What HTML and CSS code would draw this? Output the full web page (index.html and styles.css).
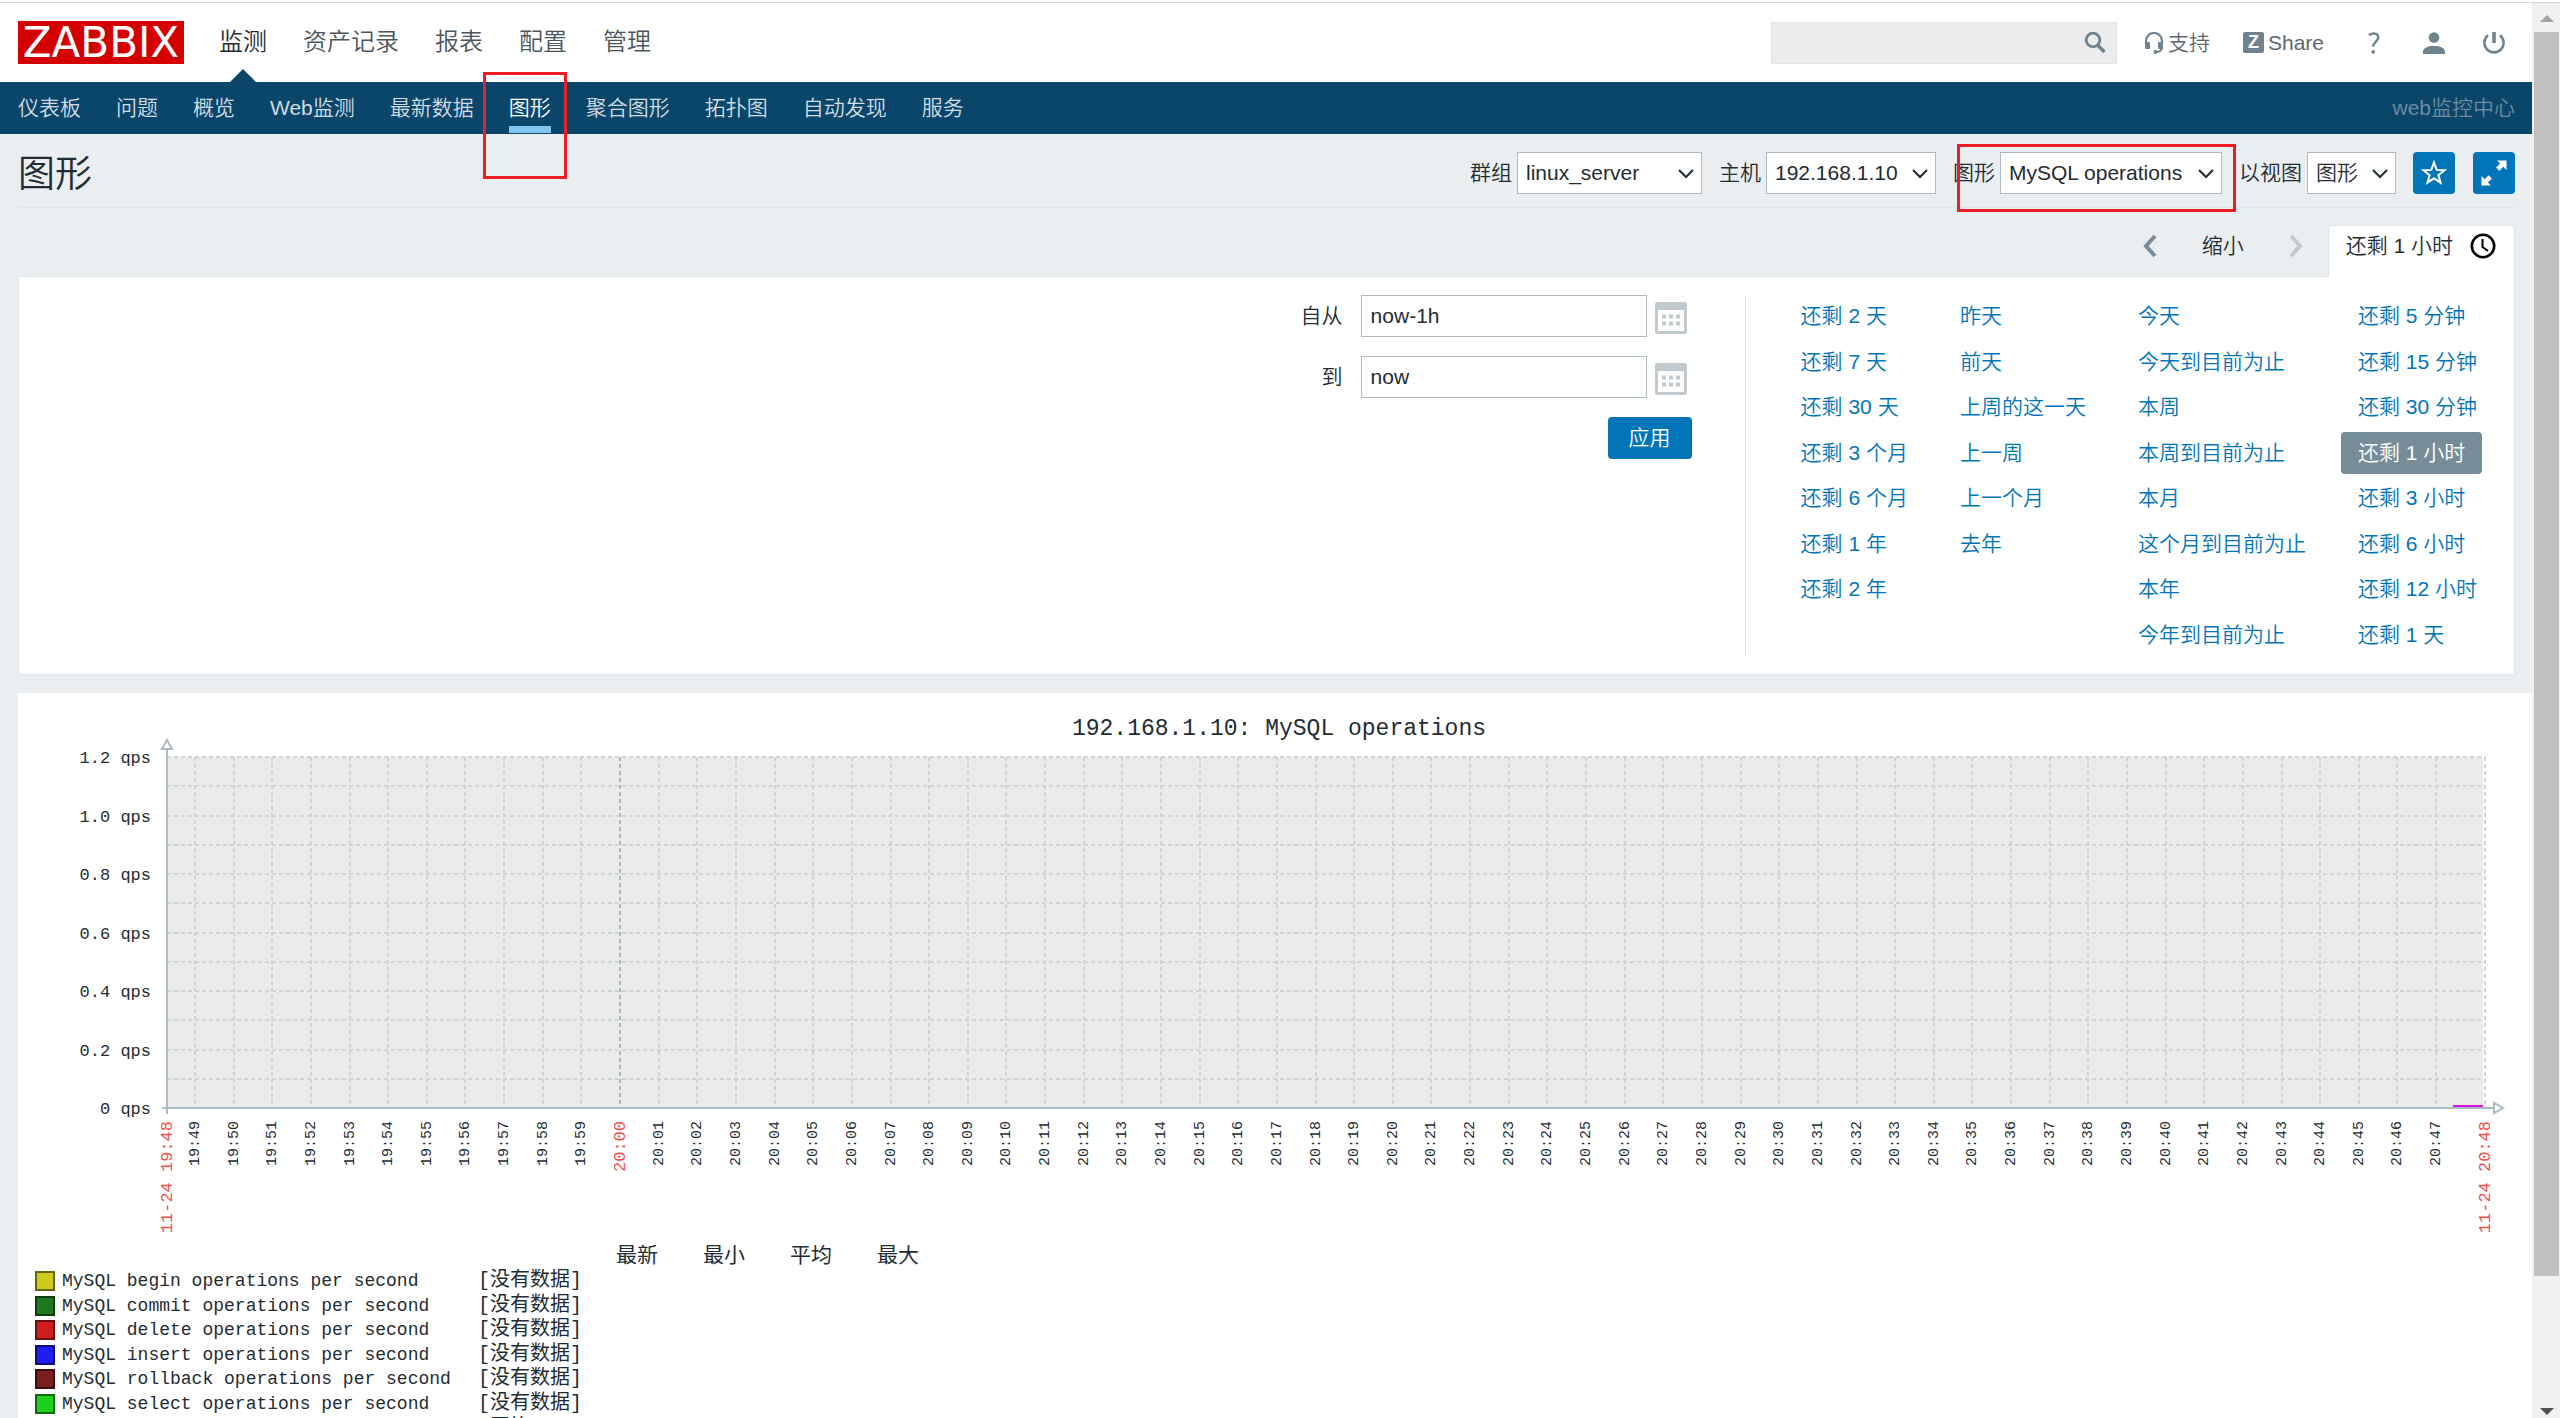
FILE: index.html
```html
<!DOCTYPE html>
<html lang="zh-CN">
<head>
<meta charset="utf-8">
<title>图形</title>
<link rel="stylesheet" href="styles.css">
</head>
<body>
<div class="window">
  <div class="page">
    <header class="top">
      <a class="logo" href="#">ZABBIX</a>
      <nav class="main-nav">
        <a class="selected" href="#">监测</a>
        <a href="#">资产记录</a>
        <a href="#">报表</a>
        <a href="#">配置</a>
        <a href="#">管理</a>
      </nav>
      <form class="search">
        <input type="text" aria-label="搜索">
        <button type="button" aria-label="搜索">
          <svg width="22" height="22" viewBox="0 0 22 22" fill="none" stroke="currentColor"><circle cx="9" cy="8" r="6.8" stroke-width="2.8"/><path d="M13.8 13.2 L20.5 20" stroke-width="3.4"/></svg>
        </button>
      </form>
      <a class="top-link" href="#">
        <svg width="20" height="22" viewBox="0 0 20 22"><path d="M2 12V9a8 8 0 0 1 16 0v3M18 15c0 3.500-3 5-6 5" fill="none" stroke="currentColor" stroke-width="2.200"/><rect x="1" y="10" width="5" height="7" rx="1" fill="currentColor"/><rect x="14" y="10" width="5" height="7" rx="1" fill="currentColor"/><circle cx="11.500" cy="20" r="2" fill="currentColor"/></svg>
        支持
      </a>
      <a class="top-link" href="#"><span class="z-badge">Z</span>Share</a>
      <div class="top-icons">
        <button type="button" aria-label="帮助"><svg width="12" height="22" viewBox="0 0 12 22"><path d="M1 3.200C4 .8 10.200.6 10.200 5.500c0 4-5 4.200-5 9.200" fill="none" stroke="currentColor" stroke-width="2.400"/><circle cx="5.200" cy="19.800" r="1.900" fill="currentColor"/></svg></button>
        <button type="button" aria-label="用户"><svg width="22" height="22" viewBox="0 0 22 22" fill="currentColor"><circle cx="11" cy="5.500" r="5.300"/><path d="M0 22v-2.500C0 16 5 14 11 14s11 2 11 5.500V22z"/></svg></button>
        <button type="button" aria-label="退出"><svg width="22" height="22" viewBox="0 0 22 22" fill="none" stroke="currentColor"><path d="M11 0v11" stroke-width="3.600"/><path d="M5 3.300a9.600 9.600 0 1 0 12 0" stroke-width="2.600"/></svg></button>
      </div>
    </header>

    <nav class="sub-nav">
      <a href="#">仪表板</a>
      <a href="#">问题</a>
      <a href="#">概览</a>
      <a href="#">Web监测</a>
      <a href="#">最新数据</a>
      <a class="selected" href="#">图形<span class="mark mark-nav"></span></a>
      <a href="#">聚合图形</a>
      <a href="#">拓扑图</a>
      <a href="#">自动发现</a>
      <a href="#">服务</a>
      <span class="server-name">web监控中心</span>
    </nav>

    <main>
      <div class="title-row">
        <h1>图形</h1>
        <form class="filters">
          <div class="field">
            <label for="group">群组</label>
            <span class="select select-group"><select id="group"><option>linux_server</option></select><svg width="16" height="10" viewBox="0 0 16 10"><path d="M1 1l7 7 7-7"/></svg></span>
          </div>
          <div class="field">
            <label for="host">主机</label>
            <span class="select select-host"><select id="host"><option>192.168.1.10</option></select><svg width="16" height="10" viewBox="0 0 16 10"><path d="M1 1l7 7 7-7"/></svg></span>
          </div>
          <div class="field">
            <label for="graph">图形</label>
            <span class="select select-graph"><select id="graph"><option>MySQL operations</option></select><svg width="16" height="10" viewBox="0 0 16 10"><path d="M1 1l7 7 7-7"/></svg></span>
            <span class="mark mark-graph"></span>
          </div>
          <div class="field">
            <label for="view">以视图</label>
            <span class="select select-view"><select id="view"><option>图形</option></select><svg width="16" height="10" viewBox="0 0 16 10"><path d="M1 1l7 7 7-7"/></svg></span>
          </div>
          <div class="actions">
            <button class="square" type="button" aria-label="收藏"><svg width="26" height="26" viewBox="0 0 26 26"><path d="M13 2.500l2.700 7.400 7.800.3-6.100 4.900 2.100 7.600-6.500-4.400-6.500 4.400 2.100-7.600-6.100-4.900 7.800-.3z" fill="none" stroke="#fff" stroke-width="2"/></svg></button>
            <button class="square" type="button" aria-label="全屏"><svg width="26" height="26" viewBox="0 0 26 26" fill="#fff"><path d="M16 0.500h9.500v9.500l-3.200-3.200-4 4-3.200-3.200 4-4z"/><path d="M10 25.500H.5V16l3.200 3.200 4-4 3.200 3.200-4 4z"/></svg></button>
          </div>
        </form>
      </div>

      <div class="time-row">
        <button class="arrow" type="button" aria-label="向前"><svg width="14" height="24" viewBox="0 0 14 24"><path d="M12 2L3 12l9 10"/></svg></button>
        <button class="zoom-out" type="button">缩小</button>
        <button class="arrow disabled" type="button" aria-label="向后" disabled><svg width="14" height="24" viewBox="0 0 14 24"><path d="M2 2l9 10-9 10"/></svg></button>
        <a class="time-tab" href="#">还剩 1 小时
          <svg width="26" height="26" viewBox="0 0 26 26" fill="none" stroke="#000" stroke-width="2.600"><circle cx="13" cy="13" r="11.200"/><path d="M12.500 6v8l5.500 4" stroke-width="2"/></svg>
        </a>
      </div>

      <section class="time-panel">
        <form class="range">
          <div class="range-row">
            <label for="from">自从</label>
            <input id="from" type="text" value="now-1h">
            <button class="calendar" type="button" aria-label="日历"><svg width="32" height="32" viewBox="0 0 32 32"><rect x="1.500" y="1.500" width="29" height="29" rx="1" fill="none" stroke="#c0cacf" stroke-width="3"/><path d="M1 1h30v7H1zM7 12.500h4v4H7zM14 12.500h4v4h-4zM21 12.500h4v4h-4zM7 19.500h4v4H7zM14 19.500h4v4h-4zM21 19.500h4v4h-4z" fill="#c0cacf"/></svg></button>
          </div>
          <div class="range-row">
            <label for="to">到</label>
            <input id="to" type="text" value="now">
            <button class="calendar" type="button" aria-label="日历"><svg width="32" height="32" viewBox="0 0 32 32"><rect x="1.500" y="1.500" width="29" height="29" rx="1" fill="none" stroke="#c0cacf" stroke-width="3"/><path d="M1 1h30v7H1zM7 12.500h4v4H7zM14 12.500h4v4h-4zM21 12.500h4v4h-4zM7 19.500h4v4H7zM14 19.500h4v4h-4zM21 19.500h4v4h-4z" fill="#c0cacf"/></svg></button>
          </div>
          <button class="apply" type="button">应用</button>
        </form>
        <div class="quick">
          <ul>
            <li><a href="#">还剩 2 天</a></li>
            <li><a href="#">还剩 7 天</a></li>
            <li><a href="#">还剩 30 天</a></li>
            <li><a href="#">还剩 3 个月</a></li>
            <li><a href="#">还剩 6 个月</a></li>
            <li><a href="#">还剩 1 年</a></li>
            <li><a href="#">还剩 2 年</a></li>
          </ul>
          <ul>
            <li><a href="#">昨天</a></li>
            <li><a href="#">前天</a></li>
            <li><a href="#">上周的这一天</a></li>
            <li><a href="#">上一周</a></li>
            <li><a href="#">上一个月</a></li>
            <li><a href="#">去年</a></li>
          </ul>
          <ul>
            <li><a href="#">今天</a></li>
            <li><a href="#">今天到目前为止</a></li>
            <li><a href="#">本周</a></li>
            <li><a href="#">本周到目前为止</a></li>
            <li><a href="#">本月</a></li>
            <li><a href="#">这个月到目前为止</a></li>
            <li><a href="#">本年</a></li>
            <li><a href="#">今年到目前为止</a></li>
          </ul>
          <ul>
            <li><a href="#">还剩 5 分钟</a></li>
            <li><a href="#">还剩 15 分钟</a></li>
            <li><a href="#">还剩 30 分钟</a></li>
            <li><a class="selected" href="#">还剩 1 小时</a></li>
            <li><a href="#">还剩 3 小时</a></li>
            <li><a href="#">还剩 6 小时</a></li>
            <li><a href="#">还剩 12 小时</a></li>
            <li><a href="#">还剩 1 天</a></li>
          </ul>
        </div>
      </section>

      <section class="chart-panel">
        <svg class="chart" id="chart" viewBox="0 0 2514 552"></svg>
        <table class="legend">
          <thead>
            <tr><th class="c-swatch"></th><th class="c-name"></th><th class="c-data"></th><th class="c-value">最新</th><th class="c-value">最小</th><th class="c-value">平均</th><th class="c-value">最大</th></tr>
          </thead>
          <tbody>
            <tr><td><i class="swatch begin"></i></td><td>MySQL begin operations per second</td><td class="none">[没有数据]</td></tr>
            <tr><td><i class="swatch commit"></i></td><td>MySQL commit operations per second</td><td class="none">[没有数据]</td></tr>
            <tr><td><i class="swatch delete"></i></td><td>MySQL delete operations per second</td><td class="none">[没有数据]</td></tr>
            <tr><td><i class="swatch insert"></i></td><td>MySQL insert operations per second</td><td class="none">[没有数据]</td></tr>
            <tr><td><i class="swatch rollback"></i></td><td>MySQL rollback operations per second</td><td class="none">[没有数据]</td></tr>
            <tr><td><i class="swatch select-op"></i></td><td>MySQL select operations per second</td><td class="none">[没有数据]</td></tr>
            <tr><td><i class="swatch update"></i></td><td>MySQL update operations per second</td><td class="none">[平均]</td></tr>
          </tbody>
        </table>
      </section>
    </main>
  </div>
  <div class="scrollbar">
    <svg width="16" height="8" viewBox="0 0 16 8"><path d="M8 0l7 7H1z" fill="#a3a3a3"/></svg>
    <div class="track"><div class="thumb"></div></div>
    <svg width="16" height="8" viewBox="0 0 16 8"><path d="M1 1h14L8 8z" fill="#505050"/></svg>
  </div>
</div>
<script src="chart.js"></script>
</body>
</html>
```
FILE: styles.css
```css
* { box-sizing: border-box; }
body {
  margin: 0;
  height: 100vh;
  overflow: hidden;
  background: #fff;
  color: #1f2c33;
  font: 350 21px/26px "Liberation Sans", "Noto Sans CJK SC", sans-serif;
}
a { color: inherit; text-decoration: none; }
button, input, select { font: inherit; color: inherit; margin: 0; padding: 0; border: 0; background: none; border-radius: 0; }
svg { display: block; flex: none; }
ul { list-style: none; margin: 0; padding: 0; }

.window {
  height: 100vh;
  display: grid;
  grid-template-columns: 1fr 28px;
  margin-top: 2px;
  border-top: 1px solid #d9d9d9;
}
.page { background: #ebeef0; min-width: 0; overflow: hidden; }

/* Header */
.top { display: flex; align-items: center; height: 79px; padding: 0 17px 0 18px; background: #fff; }
.logo {
  background: #d40000; color: #fff;
  font: 400 42px/43px "DejaVu Sans", sans-serif;
  width: 166px; height: 43px; text-align: center;
}
.main-nav { display: flex; align-self: stretch; gap: 36px; margin-left: 35px; font-size: 24px; color: #4a565c; flex: 1; }
.main-nav a { position: relative; display: flex; align-items: center; padding-bottom: 2px; white-space: nowrap; }
.main-nav .selected { color: #1f2c33; }
.main-nav .selected::after {
  content: ""; position: absolute; left: 11px; bottom: 0;
  border: 13px solid transparent; border-top: 0; border-bottom-color: #0a466a;
}
.search { display: flex; align-items: center; width: 346px; height: 42px; margin-right: 27px; background: #ececec; border: 1px solid #e2e4e5; }
.search input { flex: 1; min-width: 0; height: 40px; outline: 0; padding-left: 8px; }
.search button { margin-right: 10px; color: #6f838f; }
.top-link { display: flex; align-items: center; gap: 4px; margin-right: 33px; color: #5b686f; white-space: nowrap; }
.top-link svg { color: #6f838f; }
.z-badge { width: 21px; height: 21px; border-radius: 2px; background: #6f838f; color: #fff; font: 700 18px/21px "Liberation Sans", sans-serif; text-align: center; }
.top-icons { display: flex; gap: 18px; color: #6f838f; }
.top-icons button { width: 42px; height: 42px; display: grid; place-items: center; }
.top-link + .top-icons { margin-left: -4px; }

/* Second level menu */
.sub-nav { display: flex; align-items: stretch; gap: 35px; height: 52px; padding: 0 17px 0 18px; background: #0a466a; color: #d2dde3; }
.sub-nav a { position: relative; display: flex; align-items: center; white-space: nowrap; }
.sub-nav .selected { color: #fff; }
.sub-nav .selected::after { content: ""; position: absolute; left: 0; right: 0; bottom: 1px; height: 7px; background: #80c4f0; }
.server-name { margin-left: auto; align-self: center; color: #6e8b9d; }

/* Highlight frames over the page */
.mark { position: absolute; z-index: 2; border: 3px solid #ee1c24; pointer-events: none; }
.mark-nav { left: -26px; top: -10px; width: 84px; height: 107px; }
.mark-graph { left: 4px; top: -8px; width: 279px; height: 68px; }

/* Title and filters */
.title-row { display: flex; justify-content: space-between; align-items: center; margin: 0 17px 0 18px; padding: 18px 0 13px; border-bottom: 1px solid #dfe4e7; }
h1 { margin: 0; padding-top: 4px; font-size: 37px; line-height: 38px; font-weight: 350; }
.filters { display: flex; gap: 17px; }
.field { position: relative; display: flex; align-items: center; gap: 5px; }
.select { position: relative; display: block; height: 42px; }
.select select { appearance: none; width: 100%; height: 42px; padding: 0 32px 0 8px; background: #fff; border: 1px solid #acbbc2; }
.select svg { position: absolute; right: 8px; top: 17px; fill: none; stroke: #1f2c33; stroke-width: 2; pointer-events: none; }
.select-group { width: 185px; }
.select-host { width: 170px; }
.select-graph { width: 222px; }
.select-view { width: 89px; }
.actions { display: flex; gap: 18px; }
.square { width: 42px; height: 42px; display: grid; place-items: center; background: #0275b8; border-radius: 4px; }

/* Time selector */
.time-row { display: flex; justify-content: flex-end; align-items: flex-start; padding: 17px 17px 0 18px; }
.arrow { height: 42px; display: flex; align-items: center; }
.arrow svg { fill: none; stroke: #768d99; stroke-width: 4; }
.arrow.disabled svg { stroke: #c0cacf; }
.zoom-out { height: 42px; margin: 0 45px; }
.time-tab {
  position: relative; z-index: 1;
  display: flex; gap: 17px; height: 52px; margin: 0 0 -1px 25px; padding: 7px 18px 0 17px;
  background: #fff; border: 1px solid #dfe4e7; border-bottom: 0; border-radius: 4px 4px 0 0;
  white-space: nowrap;
}
.time-panel { display: flex; margin: 0 17px 0 18px; padding: 18px 0; background: #fff; border: 1px solid #dfe4e7; }
.range { flex: 1; display: flex; flex-direction: column; align-items: flex-end; gap: 19px; padding-right: 53px; }
.range-row { display: flex; align-items: center; }
.range-row input { width: 286px; height: 42px; margin: 0 8px 0 18px; padding: 0 9px; border: 1px solid #acbbc2; background: #fff; }
.calendar { margin-right: 5px; padding-top: 4px; }
.apply { width: 84px; height: 42px; border-radius: 4px; background: #0275b8; color: #fff; }
.quick { display: flex; gap: 18px; padding: 0 20px 0 38px; border-left: 1px solid #dfe4e7; color: #0275b8; }
.quick ul { display: grid; grid-template-rows: repeat(8, 42px); align-content: space-between; justify-items: start; height: 361px; }
.quick a { display: block; line-height: 42px; padding: 0 17px; border-radius: 4px; white-space: nowrap; }
.quick .selected { background: #768d99; color: #fff; }

/* Chart */
.chart-panel { margin: 18px 0 0 18px; background: #fff; }
.chart { width: 100%; height: auto; font-family: "Liberation Mono", monospace; font-size: 17px; font-weight: 400; fill: #1f2c33; }
.chart .title { font-size: 23px; text-anchor: middle; }
.chart .area { fill: #ebebeb; }
.chart .grid { stroke: #ccd6da; stroke-width: 2; stroke-dasharray: 4 3; }
.chart .grid.hour { stroke: #a9b8bf; }
.chart .axis { stroke: #acbbc2; stroke-width: 2; fill: #fff; }
.chart .series { stroke: #d810d8; stroke-width: 2; }
.chart .label { text-anchor: end; }
.chart .minute { font-size: 15px; }
.chart .hour-label { fill: #f24f4f; }

.legend { table-layout: fixed; border-collapse: collapse; margin-left: 17px; width: 929px; font: 400 18px/24px "Liberation Mono", "Noto Sans CJK SC", monospace; }
.legend th, .legend td { padding: 0; height: 24px; text-align: left; font-weight: 400; white-space: nowrap; overflow: hidden; }
.legend tbody tr:nth-child(even) td { height: 25px; }
.legend th { font-size: 21px; }
.legend .none { font-size: 20px; }
.c-swatch { width: 27px; }
.c-name { width: 416px; }
.c-data { width: 138px; }
.c-value { width: 87px; }
.swatch { display: block; width: 20px; height: 20px; border: 2px solid rgba(0, 0, 0, 0.5); }
.begin { background: #cccc1e; }
.commit { background: #1e781e; }
.delete { background: #d01e1e; }
.insert { background: #1e1ef0; }
.rollback { background: #781e1e; }
.select-op { background: #1ed01e; }
.update { background: #d01ed0; }

/* Scrollbar */
.scrollbar { display: flex; flex-direction: column; align-items: center; height: calc(100vh - 3px); padding: 12px 1px 3px 2px; background: #f1f1f1; }
.track { flex: 1; align-self: stretch; padding-top: 9px; }
.thumb { height: 90.5%; background: #c1c1c1; }
```
FILE: chart.js
```js
const chart = document.getElementById('chart');
const X0 = 149, X1 = 2467, Y0 = 415, Y1 = 64;
const FIRST = 177, STEP = 38.64;

function add(tag, attrs, text) {
  const el = document.createElementNS('http://www.w3.org/2000/svg', tag);
  for (const name in attrs) el.setAttribute(name, attrs[name]);
  if (text) el.textContent = text;
  chart.appendChild(el);
}
function line(x1, y1, x2, y2, cls) {
  add('line', { x1, y1, x2, y2, class: cls });
}
function upright(x, text, cls) {
  add('text', { transform: `translate(${x} 428) rotate(-90)`, class: cls }, text);
}

add('text', { x: 1261, y: 42, class: 'title' }, '192.168.1.10: MySQL operations');
add('rect', { x: X0, y: Y1, width: X1 - X0 - 2, height: Y0 - Y1, class: 'area' });

for (let i = 1; i <= 12; i++) {
  const y = Math.round(Y0 - (Y0 - Y1) * i / 12);
  line(X0, y, X1, y, 'grid');
}
for (let i = 0; i <= 12; i += 2) {
  const y = Math.round(Y0 - (Y0 - Y1) * i / 12);
  add('text', { x: 133, y: y + 6, class: 'label' }, (i ? (i / 10).toFixed(1) : '0') + ' qps');
}

for (let i = 0; i < 59; i++) {
  const x = Math.round(FIRST + STEP * i);
  const total = 19 * 60 + 49 + i;
  const minute = total % 60;
  const time = Math.floor(total / 60) + ':' + String(minute).padStart(2, '0');
  line(x, Y1, x, Y0, minute ? 'grid' : 'grid hour');
  upright(minute ? x + 4 : x + 5, time, minute ? 'label minute' : 'label hour-label');
}
line(X1, Y1, X1, Y0, 'grid');
upright(X0 + 5, '11-24 19:48', 'label hour-label');
upright(X1 + 5, '11-24 20:48', 'label hour-label');

line(X0, 54, X0, 421, 'axis');
line(144, Y0, 2476, Y0, 'axis');
add('path', { d: `M${X0} 47l5 9h-10z`, class: 'axis' });
add('path', { d: `M2485 ${Y0}l-9-5v10z`, class: 'axis' });
line(2435, Y0 - 2, 2465, Y0 - 2, 'series');
```
